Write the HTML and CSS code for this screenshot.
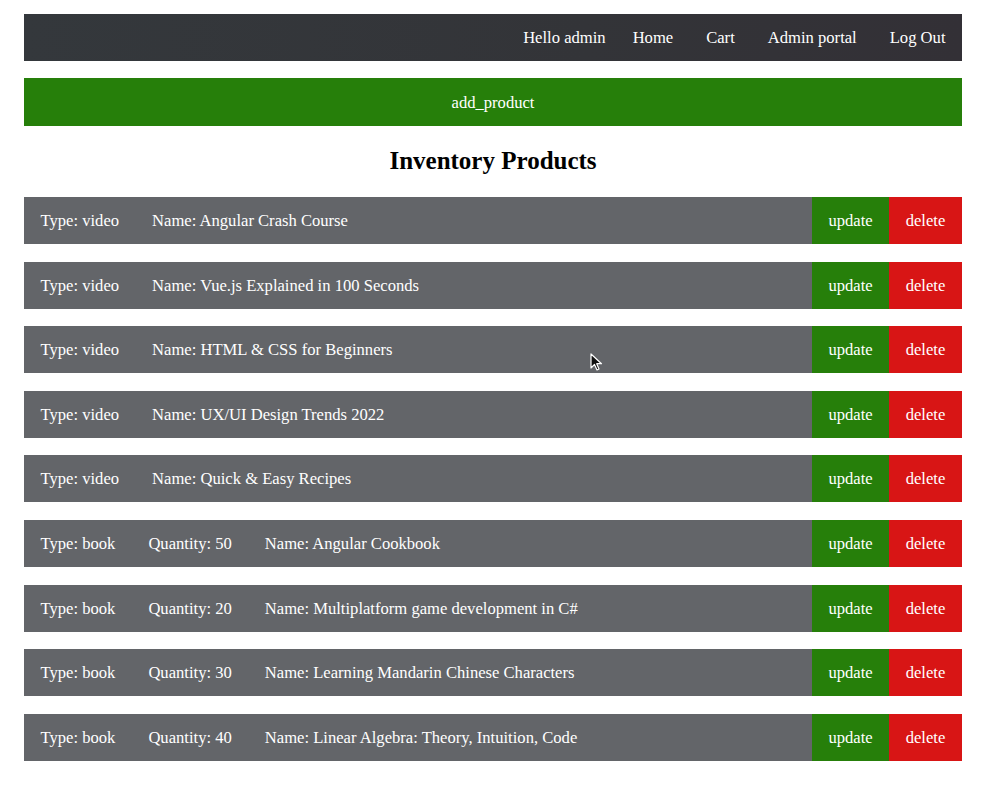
FILE: index.html
```html
<!DOCTYPE html>
<html>
<head>
<meta charset="utf-8">
<link rel="stylesheet" href="styles.css">
</head>
<body>
<div class="page">
  <nav class="navbar">
    <span class="hello">Hello admin</span>
    <a class="nav-link">Home</a>
    <a class="nav-link">Cart</a>
    <a class="nav-link">Admin portal</a>
    <a class="nav-link">Log Out</a>
  </nav>
  <div class="add-bar">add_product</div>
  <h2 class="title">Inventory Products</h2>
  <div class="list">
    <div class="row"><div class="info"><span>Type: video</span><span>Name: Angular Crash Course</span></div><button class="btn upd">update</button><button class="btn del">delete</button></div>
    <div class="row"><div class="info"><span>Type: video</span><span>Name: Vue.js Explained in 100 Seconds</span></div><button class="btn upd">update</button><button class="btn del">delete</button></div>
    <div class="row"><div class="info"><span>Type: video</span><span>Name: HTML &amp; CSS for Beginners</span></div><button class="btn upd">update</button><button class="btn del">delete</button></div>
    <div class="row"><div class="info"><span>Type: video</span><span>Name: UX/UI Design Trends 2022</span></div><button class="btn upd">update</button><button class="btn del">delete</button></div>
    <div class="row"><div class="info"><span>Type: video</span><span>Name: Quick &amp; Easy Recipes</span></div><button class="btn upd">update</button><button class="btn del">delete</button></div>
    <div class="row"><div class="info"><span>Type: book</span><span>Quantity: 50</span><span>Name: Angular Cookbook</span></div><button class="btn upd">update</button><button class="btn del">delete</button></div>
    <div class="row"><div class="info"><span>Type: book</span><span>Quantity: 20</span><span>Name: Multiplatform game development in C#</span></div><button class="btn upd">update</button><button class="btn del">delete</button></div>
    <div class="row"><div class="info"><span>Type: book</span><span>Quantity: 30</span><span>Name: Learning Mandarin Chinese Characters</span></div><button class="btn upd">update</button><button class="btn del">delete</button></div>
    <div class="row"><div class="info"><span>Type: book</span><span>Quantity: 40</span><span>Name: Linear Algebra: Theory, Intuition, Code</span></div><button class="btn upd">update</button><button class="btn del">delete</button></div>
  </div>
</div>
<svg class="cursor" width="14" height="20" viewBox="0 0 14 20"><path d="M1 1 L1 15 L4.5 11.5 L7 17 L9 16 L6.7 10.7 L11.5 10.7 Z" fill="#111" stroke="#fff" stroke-width="1.2" stroke-linejoin="round"/></svg>
</body>
</html>
```
FILE: styles.css
```css
* { box-sizing: border-box; }
html, body { margin: 0; padding: 0; background: #fff; }
body { font-family: "Liberation Serif", "Times New Roman", serif; font-size: 16.6px; color: #fff; }
.page { width: 938px; margin-left: 24px; padding-top: 14px; }
.navbar {
  height: 47px;
  display: flex;
  align-items: center;
  justify-content: flex-end;
  padding-top: 1px;
  background: linear-gradient(90deg, #34383c 0%, #333438 60%, #333036 100%);
}
.hello { padding: 0 10.5px 0 16px; }
.nav-link { padding: 0 16.5px; color: #fff; }
.add-bar {
  margin-top: 17px;
  height: 48px;
  padding-top: 1px;
  background: #267f0a;
  display: flex;
  align-items: center;
  justify-content: center;
}
.title {
  margin: 21px 0 0;
  height: 50px;
  color: #000;
  text-align: center;
  font-size: 25px;
  font-weight: bold;
  line-height: 28px;
}
.list { display: flex; flex-direction: column; gap: 17.6px; }
.row {
  height: 47px;
  display: flex;
  align-items: stretch;
  background: #636569;
}
.info { flex: 1; display: flex; align-items: center; padding-top: 1px; }
.info span { padding: 0 16.5px; }
.btn {
  border: none;
  margin: 0;
  color: #fff;
  font-family: inherit;
  font-size: 16.6px;
  padding: 1px 0 0;
}
.upd { width: 77px; background: #267f0a; }
.del { width: 73px; background: #d81515; }
.cursor { position: absolute; left: 590px; top: 353px; }
```
